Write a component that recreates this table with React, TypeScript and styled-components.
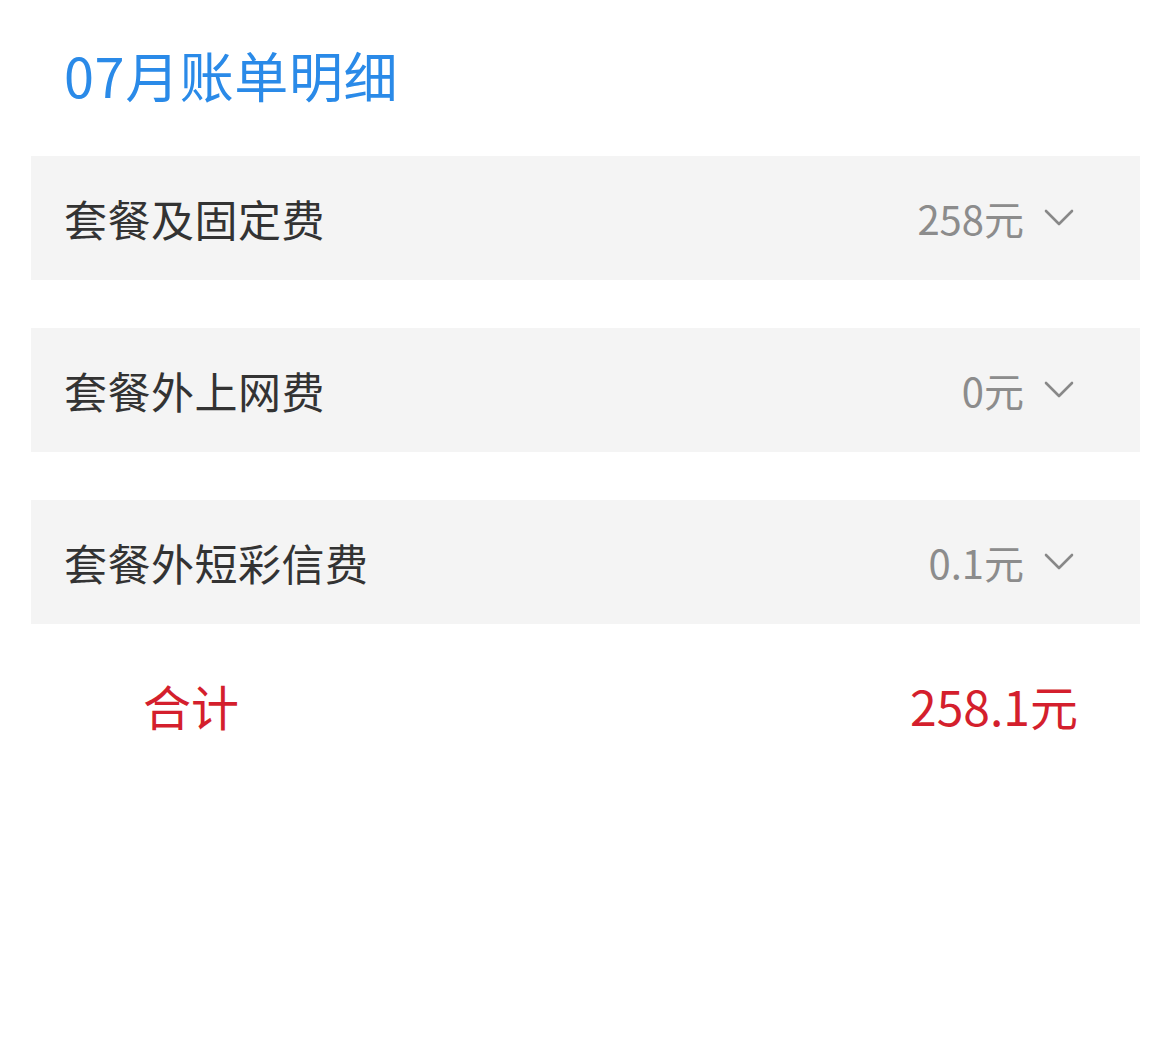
import React from 'react';
import styled, { createGlobalStyle } from 'styled-components';

const GlobalStyle = createGlobalStyle`
  body {
    margin: 0;
    background: #ffffff;
    font-family: "Noto Sans CJK SC", "Noto Sans", sans-serif;
  }
`;

const Page = styled.div`
  width: 1172px;
  min-height: 1064px;
  background: #ffffff;
  padding: 0 32px 0 31px;
  box-sizing: border-box;
`;

const Title = styled.h1`
  margin: 0;
  padding: 39px 0 0 33px;
  height: 156px;
  box-sizing: border-box;
  font-size: 54px;
  font-weight: 400;
  line-height: 72px;
  letter-spacing: 0.6px;
  color: #2a8ae8;
`;

const List = styled.div`
  display: flex;
  flex-direction: column;
  gap: 48px;
`;

const Row = styled.div`
  height: 124px;
  background: #f4f4f4;
  display: flex;
  align-items: center;
  justify-content: space-between;
  padding: 0 66px 0 33px;
`;

const Label = styled.span`
  font-size: 43px;
  color: #333333;
  letter-spacing: 0.5px;
`;

const Value = styled.span`
  display: flex;
  align-items: center;
  gap: 20px;
  font-size: 40px;
  color: #8c8c8c;
`;

const Total = styled.div`
  height: 162px;
  display: flex;
  align-items: center;
  justify-content: space-between;
  padding: 0 62px 0 112px;
  color: #d41f2d;
  font-size: 48px;
`;

const Chevron = () => (
  <svg width="30" height="20" viewBox="0 0 30 20" fill="none">
    <path d="M2 3 L15 16 L28 3" stroke="#888888" strokeWidth="2.6" strokeLinecap="round" strokeLinejoin="round" />
  </svg>
);

const items = [
  { label: '套餐及固定费', value: '258元' },
  { label: '套餐外上网费', value: '0元' },
  { label: '套餐外短彩信费', value: '0.1元' },
];

export default function App() {
  return (
    <Page>
      <GlobalStyle />
      <Title>07月账单明细</Title>
      <List>
        {items.map((it) => (
          <Row key={it.label}>
            <Label>{it.label}</Label>
            <Value>
              {it.value}
              <Chevron />
            </Value>
          </Row>
        ))}
      </List>
      <Total>
        <span>合计</span>
        <span>258.1元</span>
      </Total>
    </Page>
  );
}
